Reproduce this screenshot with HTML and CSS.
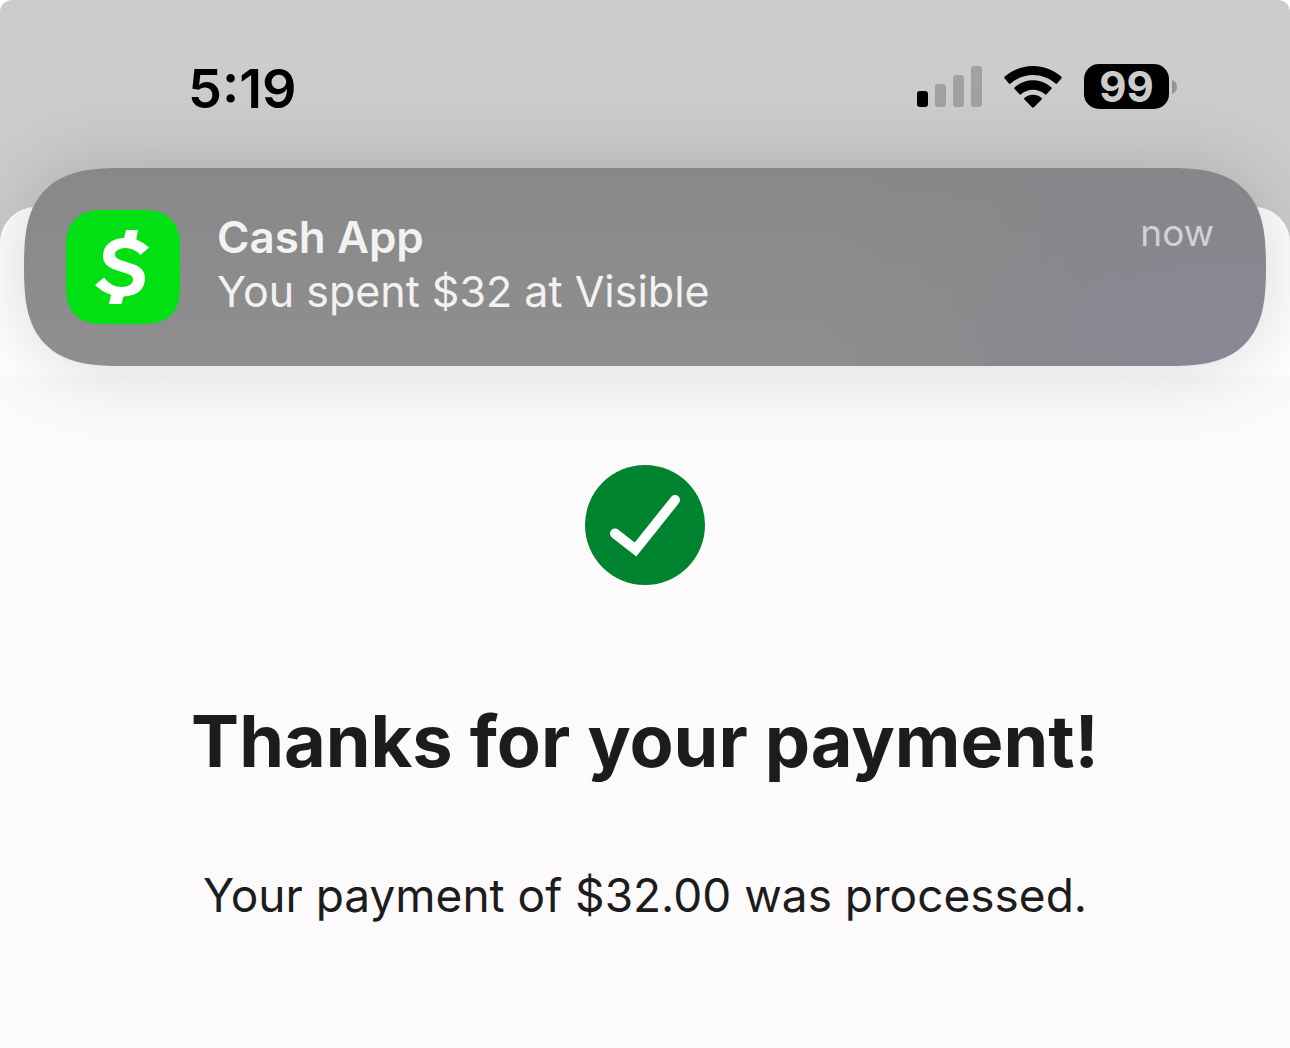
FILE: index.html
```html
<!DOCTYPE html>
<html lang="en">
<head>
<meta charset="utf-8">
<meta name="viewport" content="width=device-width, initial-scale=1">
<title>Payment confirmation</title>
<link rel="stylesheet" href="styles.css">
</head>
<body>
<div class="screen">
  <header class="status-bar">
    <time class="clock">5:19</time>
    <div class="indicators">
      <svg class="signal" viewBox="0 0 65 41" aria-label="Signal, one bar">
        <rect x="0" y="25" width="11" height="16" rx="3"/>
        <g fill="#a1a1a1"><rect x="18" y="18" width="11" height="23" rx="3"/><rect x="36" y="9" width="11" height="32" rx="3"/><rect x="54" y="0" width="11" height="41" rx="3"/></g>
      </svg>
      <svg class="wifi" viewBox="0 0 58 42" aria-label="Wi-Fi">
        <path d="M.5 12.300Q-.2 11.500.6 10.800C17-3.600 41-3.600 57.400 10.800Q58.200 11.500 57.500 12.300L53 17.600Q52.300 18.300 51.500 17.600C38.500 6.200 19.500 6.200 6.500 17.600Q5.700 18.300 5 17.600Z"/>
        <path d="M10.500 22.800Q9.800 22.100 10.600 21.400C21.300 12 36.700 12 47.400 21.400Q48.200 22.100 47.500 22.800L42.500 28.300Q41.800 29 41 28.300C34.200 22.300 23.800 22.300 17 28.300Q16.200 29 15.500 28.300Z"/>
        <path d="M20.200 33.300Q19.500 32.600 20.400 31.900C25.500 27.600 32.500 27.600 37.600 31.900Q38.500 32.600 37.800 33.300L29.900 41.300Q29 42.200 28.100 41.300Z"/>
      </svg>
      <div class="battery">
        <span class="battery-level">99</span>
        <svg class="battery-tip" viewBox="0 0 5 14"><path d="M0 0Q5 2 5 7T0 14Z" fill="#949494"/></svg>
      </div>
    </div>
  </header>

  <aside class="banner">
    <svg class="app-icon" viewBox="0 0 114 114" aria-label="Cash App">
      <path fill="#00e013" d="M0 36C0 12 12 0 36 0H78C102 0 114 12 114 36V78C114 102 102 114 78 114H36C12 114 0 102 0 78Z"/>
      <path fill="#fff" d="M60 20H72L70.300 29.500Q77 32 83 37.500L74.500 45Q68 38 59.500 38C53 38 49 41 49 44.500C49 48.500 54 50 62 52.500C73 55.500 79 59.500 79 68C79 79.500 71 86 57.500 86.500L55.500 94H43L45 84.700Q36 82 29 75L38 67.500Q45 77 56 77C62.500 77 67 74 67 69.500C67 65 62.500 64 54.500 61.500C43 58.500 37 54.500 37 46C37 36 45 28.500 58 28Z"/>
    </svg>
    <div class="banner-text">
      <strong class="banner-title">Cash App</strong>
      <span>You spent $32 at Visible</span>
    </div>
    <time class="banner-time">now</time>
  </aside>

  <main class="sheet">
    <div class="sheet-top"></div>
    <section class="confirmation">
      <svg class="check" viewBox="0 0 120 120" aria-label="Success">
        <circle cx="60" cy="60" r="60" fill="#00832e"/>
        <path d="M30 68.500 50.500 84.500 90 35" fill="none" stroke="#fff" stroke-width="10" stroke-linecap="round"/>
      </svg>
      <h1>Thanks for your payment!</h1>
      <p>Your payment of $32.00 was processed.</p>
    </section>
  </main>
</div>
</body>
</html>
```
FILE: styles.css
```css
* { box-sizing: border-box; }

body {
  margin: 0;
  background: #fff;
  font-family: Inter, "Liberation Sans", sans-serif;
}

svg { display: block; }

.screen {
  position: relative;
  display: flex;
  flex-direction: column;
  min-height: 100vh;
  overflow: hidden;
  border-radius: 12px 12px 0 0;
  background: #ccc;
}

.status-bar {
  display: flex;
  justify-content: space-between;
  align-items: flex-start;
  padding: 56px 113px 0 188px;
  min-height: 207px;
}

.clock {
  font-size: 54px;
  font-weight: 600;
  line-height: 66px;
  color: #000;
}

.indicators {
  display: flex;
  align-items: center;
  gap: 22px;
  padding-top: 8px;
}

.signal { width: 65px; height: 41px; }
.wifi { width: 58px; height: 42px; }

.battery {
  display: flex;
  align-items: center;
  gap: 3px;
}

.battery-level {
  width: 85px;
  border-radius: 15px;
  background: #000;
  color: #ccc;
  font-size: 42px;
  font-weight: 700;
  line-height: 45px;
  text-align: center;
}

.battery-tip { width: 5px; height: 14px; }

.banner {
  position: absolute;
  top: 168px;
  left: 24px;
  right: 24px;
  display: flex;
  align-items: flex-start;
  gap: 37px;
  padding: 42px 52px 42px 42px;
  min-height: 198px;
  border-radius: 76px;
  background:
    radial-gradient(ellipse 260px 140px at 96% 90%, #8a8894, transparent),
    linear-gradient(100deg, transparent 64%, #87868b 88%),
    linear-gradient(#888, #8f8f8f);
  box-shadow: 0 0 80px rgba(0, 0, 0, 0.17);
  color: #f2f2f2;
}

@supports (corner-shape: superellipse(1.5)) {
  .banner {
    border-radius: 99px;
    corner-shape: superellipse(1.5);
  }
}

.app-icon { width: 114px; height: 114px; }

.banner-text {
  display: flex;
  flex-direction: column;
  flex: 1;
  font-size: 43px;
  line-height: 54px;
}

.banner-title {
  font-size: 44px;
  font-weight: 600;
}

.banner-time {
  color: #d2d1d6;
  font-size: 37px;
  line-height: 46px;
}

.sheet {
  display: flex;
  flex-direction: column;
  flex: 1;
  overflow: hidden;
  border-radius: 36px 36px 0 0;
  background: #fcfafb;
}

.sheet-top {
  height: 168px;
  background: #fff;
}

.confirmation {
  display: flex;
  flex-direction: column;
  align-items: center;
  padding: 90px 24px;
  color: #1c1c1c;
  text-align: center;
}

.check { width: 120px; height: 120px; }

h1 {
  margin: 112px 0 0;
  font-size: 72px;
  font-weight: 700;
  line-height: 88px;
}

p {
  margin: 78px 0 0;
  font-size: 46px;
  line-height: 64px;
}
```
